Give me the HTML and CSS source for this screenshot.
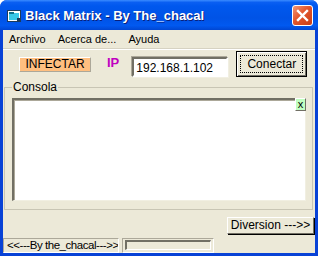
FILE: index.html
```html
<!DOCTYPE html>
<html lang="es">
<head>
    <meta charset="UTF-8">
    <title>Black Matrix - By The_chacal</title>
    <link rel="stylesheet" href="styles.css">
</head>
<body>
    <div class="window">
        <!-- Barra de titulo -->
        <div class="titlebar">
            <svg class="app-icon" width="14" height="12" viewBox="0 0 14 12">
                <rect x="0.5" y="0.5" width="13" height="11" fill="#fff" stroke="#1d3b5a"/>
                <rect x="2" y="3" width="10" height="7" fill="#38c8e8"/>
                <rect x="2" y="2" width="5" height="2" fill="#0e6f8c"/>
                <rect x="10" y="8" width="3" height="3" fill="#1d3b5a"/>
            </svg>
            <span class="title">Black Matrix - By The_chacal</span>
            <div class="close-btn">
                <svg width="13" height="13" viewBox="0 0 13 13">
                    <path d="M2 2 L11 11 M11 2 L2 11" stroke="#fff" stroke-width="2.4" stroke-linecap="square"/>
                </svg>
            </div>
        </div>

        <div class="client">
            <!-- Menu -->
            <ul class="menubar">
                <li>Archivo</li>
                <li>Acerca de...</li>
                <li>Ayuda</li>
            </ul>

            <!-- Conexion -->
            <div class="toolbar">
                <button class="btn-infectar">INFECTAR</button>
                <span class="ip-label">IP</span>
                <div class="textbox">192.168.1.102</div>
                <button class="btn btn-conectar"><span class="focus">Conectar</span></button>
            </div>

            <!-- Consola -->
            <fieldset class="consola">
                <legend>Consola</legend>
                <div class="memo">
                    <span class="memo-close">x</span>
                </div>
            </fieldset>

            <div class="actions">
                <button class="btn btn-diversion">Diversion ---&gt;&gt;</button>
            </div>

            <!-- Barra de estado -->
            <div class="statusbar">
                <div class="panel panel-text">&lt;&lt;---By the_chacal---&gt;&gt;</div>
                <div class="panel panel-progress"><div class="progress"></div></div>
            </div>
        </div>
    </div>
</body>
</html>
```
FILE: styles.css
```css
/* Estilos generales */
body {
    margin: 0;
    padding: 0;
    background-color: #fff;
    font-family: "Liberation Sans", Arial, sans-serif;
    font-size: 11px;
    color: #000;
}

/* Ventana estilo XP */
.window {
    width: 318px;
    height: 256px;
    display: flex;
    flex-direction: column;
    background-color: #0842d6;
    border-radius: 7px 7px 0 0;
    overflow: hidden;
}

/* Barra de titulo */
.titlebar {
    height: 30px;
    flex: none;
    display: flex;
    align-items: center;
    padding: 0 5px 0 7px;
    box-sizing: border-box;
    background: linear-gradient(#3b8cff 0, #0a5ff2 8%, #0058ee 20%, #0053e6 60%, #0159f0 85%, #0046d2 100%);
}

.app-icon {
    margin-top: 1px;
}

.title {
    margin-left: 4px;
    color: #fff;
    font-weight: bold;
    font-size: 13px;
    text-shadow: 1px 1px #0a1f7a;
    flex: 1;
}

.close-btn {
    width: 19px;
    height: 19px;
    border: 1px solid #fff;
    border-radius: 3px;
    background: linear-gradient(135deg, #f29878 0, #e2552c 45%, #c83d16 100%);
    display: flex;
    align-items: center;
    justify-content: center;
}

/* Area cliente */
.client {
    flex: 1;
    margin: 0 3px 3px 3px;
    background-color: #ece9d8;
    display: flex;
    flex-direction: column;
}

/* Menu */
.menubar {
    list-style: none;
    margin: 0;
    padding: 0 0 0 1px;
    height: 18px;
    display: flex;
    align-items: center;
    border-bottom: 1px solid #d6d2c2;
    box-shadow: 0 1px #fff;
    font-size: 11px;
}

.menubar li {
    padding: 0 6px 0 5px;
    margin-right: 1px;
}

/* Fila de conexion */
.toolbar {
    height: 32px;
    display: flex;
    align-items: flex-start;
}

button {
    font-family: "Liberation Sans", Arial, sans-serif;
    font-size: 11px;
    color: #000;
    padding: 0;
    margin: 0;
    cursor: pointer;
}

.btn-infectar {
    margin: 8px 0 0 16px;
    width: 72px;
    height: 15px;
    background-color: #ffbf80;
    border: 1px solid;
    border-color: #fff #aca899 #aca899 #fff;
    line-height: 13px;
    font-size: 12px;
}

.ip-label {
    margin: 7px 0 0 16px;
    color: #c000c0;
    font-weight: bold;
    font-size: 13px;
    line-height: 13px;
}

.textbox {
    margin: 8px 0 0 13px;
    width: 96px;
    height: 20px;
    box-sizing: border-box;
    background-color: #fff;
    border: 2px solid;
    border-color: #716f64 #fff #fff #716f64;
    box-shadow: -1px -1px #aca899, 1px 1px #f1efe2;
    padding: 2px 0 0 2px;
    font-size: 12px;
}

.btn {
    background-color: #ece9d8;
    border: 1px solid;
    border-color: #fff #716f64 #716f64 #fff;
    box-shadow: 1px 1px #000;
}

.btn-conectar {
    margin: 2px 0 0 8px;
    width: 71px;
    height: 26px;
    border-color: #000;
    box-shadow: inset 1px 1px #fff, inset -1px -1px #716f64;
    padding: 3px;
}

.btn-conectar .focus {
    display: block;
    height: 100%;
    box-sizing: border-box;
    border: 1px dotted #000;
    line-height: 16px;
    font-size: 12px;
}

/* Grupo consola */
.consola {
    margin: 0 2px 0 1px;
    padding: 4px 6px 8px 7px;
    border: 1px solid #c8c5b4;
    height: 129px;
    box-sizing: border-box;
}

.consola legend {
    padding: 0 1px;
    line-height: 13px;
    font-size: 12px;
}

.memo {
    position: relative;
    height: 103px;
    box-sizing: border-box;
    background-color: #fff;
    border-style: solid;
    border-width: 2px 1px 1px 2px;
    border-color: #716f64 #f1efe2 #f1efe2 #716f64;
    box-shadow: inset 1px 1px #aca899;
}

/* Boton pequeño de limpiar consola */
.memo-close {
    position: absolute;
    top: -2px;
    right: -1px;
    width: 11px;
    height: 13px;
    box-sizing: border-box;
    background-color: #c0ffc0;
    border: 1px solid;
    border-color: #fff #716f64 #716f64 #fff;
    font-size: 11px;
    line-height: 10px;
    text-align: center;
}

/* Fila de acciones */
.actions {
    display: flex;
    justify-content: flex-end;
    padding: 7px 1px 0 0;
}

.btn-diversion {
    width: 87px;
    height: 17px;
    line-height: 15px;
    font-size: 12px;
}

/* Barra de estado */
.statusbar {
    margin-top: auto;
    height: 15px;
    display: flex;
    gap: 3px;
}

.panel {
    box-sizing: border-box;
    height: 15px;
    border: 1px solid;
    border-color: #aca899 #fff #fff #aca899;
}

.panel-text {
    width: 116px;
    padding-left: 3px;
    line-height: 13px;
    font-size: 11.5px;
    letter-spacing: -0.45px;
    white-space: nowrap;
    overflow: hidden;
}

.panel-progress {
    width: 92px;
    padding: 1px 2px;
}

.progress {
    height: 10px;
    box-sizing: border-box;
    border: 2px solid;
    border-color: #716f64 #fff #fff #716f64;
    border-width: 2px 1px 1px 2px;
}
```
